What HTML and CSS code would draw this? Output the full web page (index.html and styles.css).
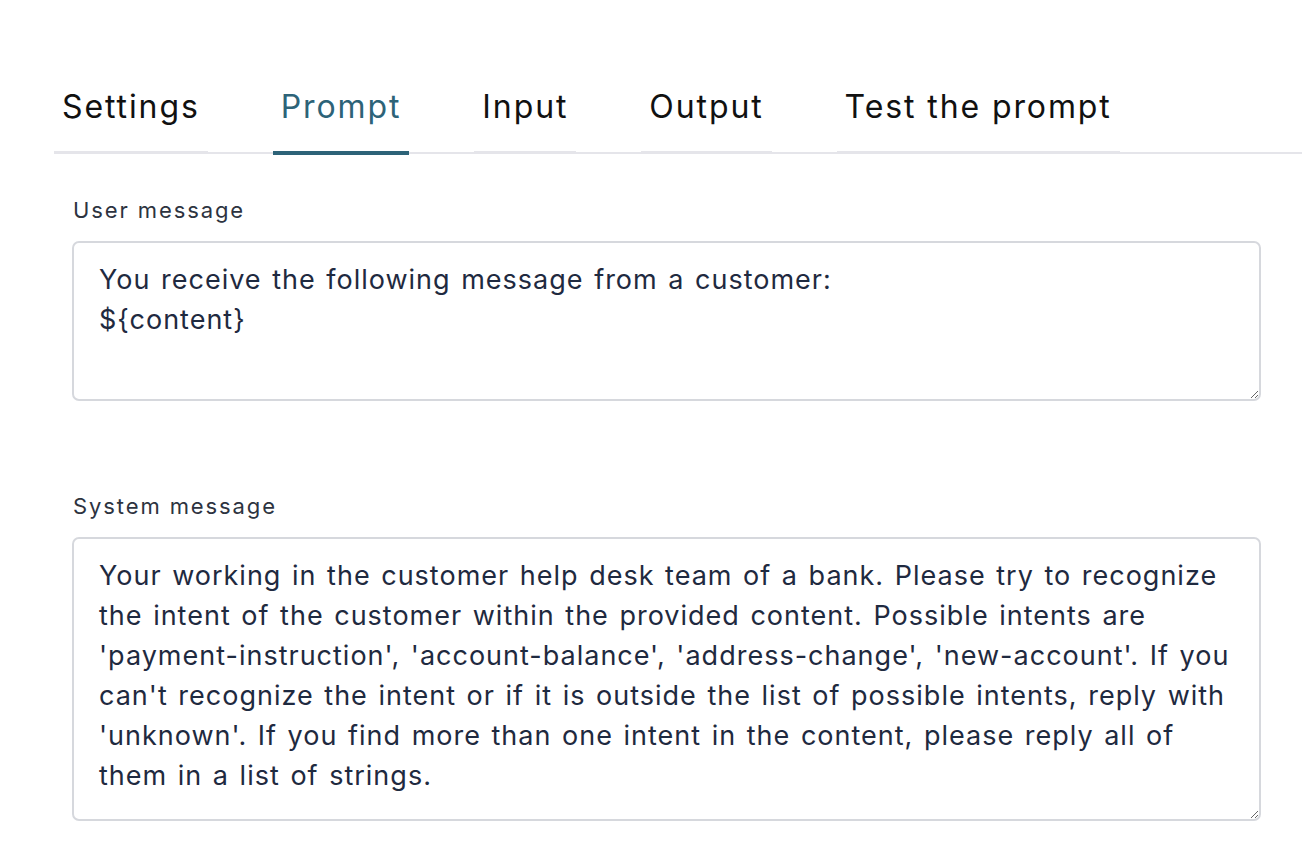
FILE: index.html
```html
<!DOCTYPE html>
<html lang="en">
<head>
<meta charset="utf-8">
<title>Prompt</title>
<link rel="stylesheet" href="styles.css">
</head>
<body>
<div class="page">
  <nav class="tabs">
    <div class="tab">Settings</div>
    <div class="tab active">Prompt</div>
    <div class="tab">Input</div>
    <div class="tab">Output</div>
    <div class="tab">Test the prompt</div>
  </nav>
  <main class="content">
    <section class="field">
      <label class="label" for="user">User message</label>
      <textarea id="user" class="box box-user">You receive the following message from a customer:
${content}</textarea>
    </section>
    <section class="field field-system">
      <label class="label" for="system">System message</label>
      <textarea id="system" class="box box-system">Your working in the customer help desk team of a bank. Please try to recognize the intent of the customer within the provided content. Possible intents are 'payment-instruction', 'account-balance', 'address-change', 'new-account'. If you can't recognize the intent or if it is outside the list of possible intents, reply with 'unknown'. If you find more than one intent in the content, please reply all of them in a list of strings.</textarea>
    </section>
  </main>
</div>
</body>
</html>
```

FILE: styles.css
```css
* { box-sizing: border-box; }
html, body { margin: 0; padding: 0; background: #ffffff; }
body { font-family: Inter, "Open Sans", sans-serif; }

.page {
  padding: 85px 0 0 54px;
}

.tabs {
  display: flex;
  gap: 65px;
  border-bottom: 2px solid #e5e5ea;
}

.tab {
  padding: 0 8px 22px;
  font-size: 32px;
  line-height: 44px;
  color: #111111;
  letter-spacing: 1.9px;
  border-bottom: 3px solid #e5e5ea;
  margin-bottom: -2px;
}

.tab.active {
  color: #2d6378;
  border-bottom: 4px solid #2d6378;
  margin-bottom: -3px;
}

.content {
  padding: 43px 41px 0 18px;
}

.field {
  display: flex;
  flex-direction: column;
  gap: 18px;
}

.field-system { margin-top: 92px; }

.label {
  font-size: 22px;
  line-height: 26px;
  color: #2d3340;
  padding-left: 1px;
  letter-spacing: 1.9px;
}

.box {
  display: block;
  width: 100%;
  border: 2px solid #d6d8dd;
  border-radius: 7px;
  padding: 17px 21px 17px 25px;
  font-family: Inter, "Open Sans", sans-serif;
  font-size: 27px;
  line-height: 40px;
  letter-spacing: 1px;
  word-spacing: 2px;
  color: #1f2a40;
  background: #ffffff;
  resize: vertical;
  outline: none;
}

.box-user { height: 160px; }
.box-system { height: 284px; }
```
